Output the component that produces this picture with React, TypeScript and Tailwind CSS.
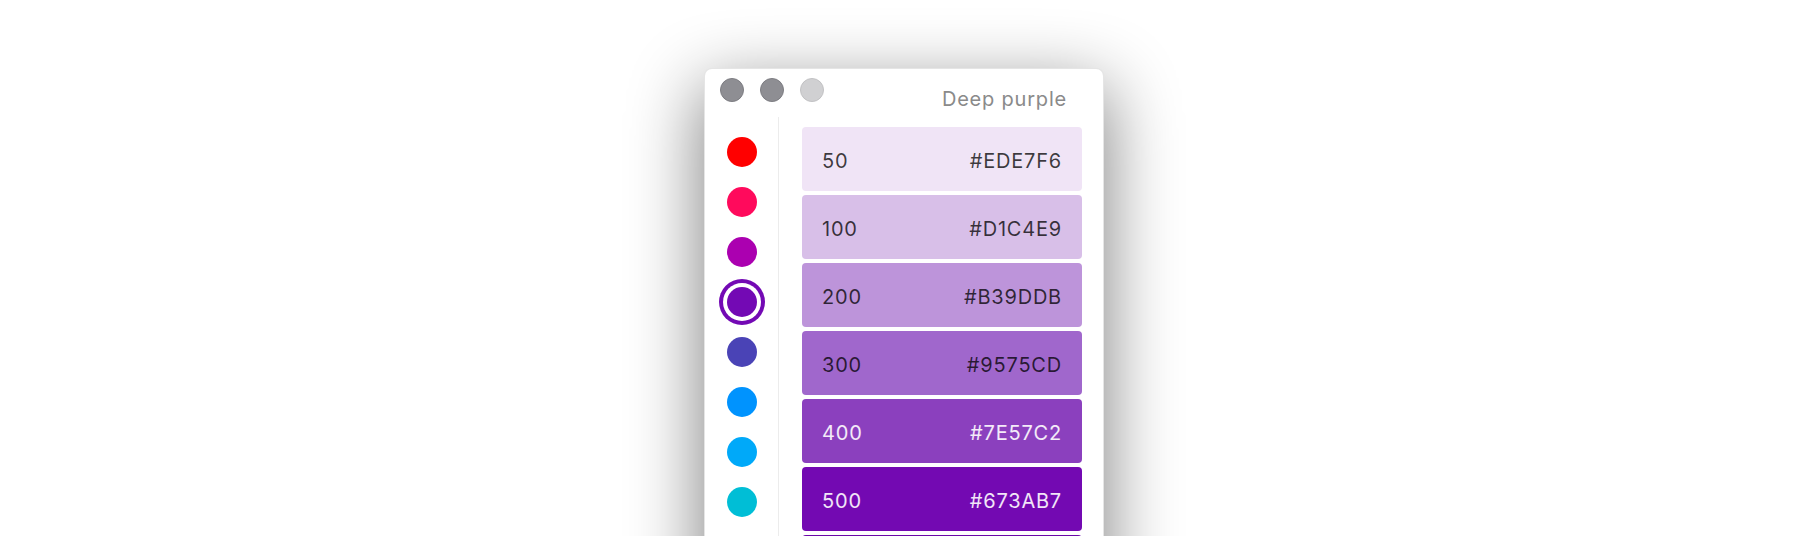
const dots = [
  { name: "Red", color: "#ff0000" },
  { name: "Pink", color: "#ff0a5c" },
  { name: "Purple", color: "#ab00b0" },
  { name: "Deep purple", color: "#7309b4" },
  { name: "Indigo", color: "#4a43b6" },
  { name: "Blue", color: "#0093fe" },
  { name: "Light blue", color: "#00a9f9" },
  { name: "Cyan", color: "#00bed6" },
  { name: "Teal", color: "#00998a" },
  { name: "Green", color: "#3fb34a" },
];

const shades = [
  { step: "50", hex: "#EDE7F6", bg: "#f0e4f6", light: false },
  { step: "100", hex: "#D1C4E9", bg: "#d8bfe8", light: false },
  { step: "200", hex: "#B39DDB", bg: "#bd94da", light: false },
  { step: "300", hex: "#9575CD", bg: "#a067cc", light: false },
  { step: "400", hex: "#7E57C2", bg: "#8b40be", light: true },
  { step: "500", hex: "#673AB7", bg: "#7309b2", light: true },
  { step: "600", hex: "#5E35B1", bg: "#6a08a8", light: true },
  { step: "700", hex: "#512DA8", bg: "#5c069c", light: true },
];

const selected = "Deep purple";

const App = () => {
  return (
    <div
      className="h-[536px] w-full overflow-hidden bg-white pt-[68px] flex justify-center pl-[4px]"
      style={{ fontFamily: "Inter, 'Noto Sans', sans-serif" }}
    >
      <div className="w-[400px] h-[600px] shrink-0 bg-white rounded-[8px] border border-black/10 shadow-[0_22px_70px_4px_rgba(0,0,0,0.48)] flex flex-col">
        <div className="flex items-start h-[52px] pl-[15px] pt-[9px]">
          <div className="flex gap-4">
            <div className="w-6 h-6 rounded-full bg-[#8e8e93] border border-[#7d7d82]" />
            <div className="w-6 h-6 rounded-full bg-[#8e8e93] border border-[#7d7d82]" />
            <div className="w-6 h-6 rounded-full bg-[#d0d0d2] border border-[#c2c2c4]" />
          </div>
          <div className="ml-auto mr-[36px] mt-[9px] text-[20px] leading-6 tracking-[0.8px] text-[#8a8a8a]">
            {selected}
          </div>
        </div>
        <div className="flex flex-1">
          <div className="w-[74px] border-r border-[#ececec] flex flex-col items-center gap-5 pt-[20px]">
            {dots.map((d) => (
              <div
                key={d.name}
                className={
                  d.name === selected
                    ? "w-[30px] h-[30px] shrink-0 rounded-full ring-4 ring-[#7309b4] ring-offset-4 ring-offset-white"
                    : "w-[30px] h-[30px] shrink-0 rounded-full"
                }
                style={{ backgroundColor: d.color }}
              />
            ))}
          </div>
          <div className="flex-1 flex flex-col gap-1 pt-[10px] pl-[23px] pr-[21px]">
            {shades.map((s) => (
              <div
                key={s.step}
                className={
                  s.light
                    ? "h-16 shrink-0 rounded-[4px] flex items-center justify-between px-5 pt-[4px] text-[20px] tracking-[0.8px] text-white/90"
                    : "h-16 shrink-0 rounded-[4px] flex items-center justify-between px-5 pt-[4px] text-[20px] tracking-[0.8px] text-black/75"
                }
                style={{ backgroundColor: s.bg }}
              >
                <span>{s.step}</span>
                <span>{s.hex}</span>
              </div>
            ))}
          </div>
        </div>
      </div>
    </div>
  );
};

export default App;
